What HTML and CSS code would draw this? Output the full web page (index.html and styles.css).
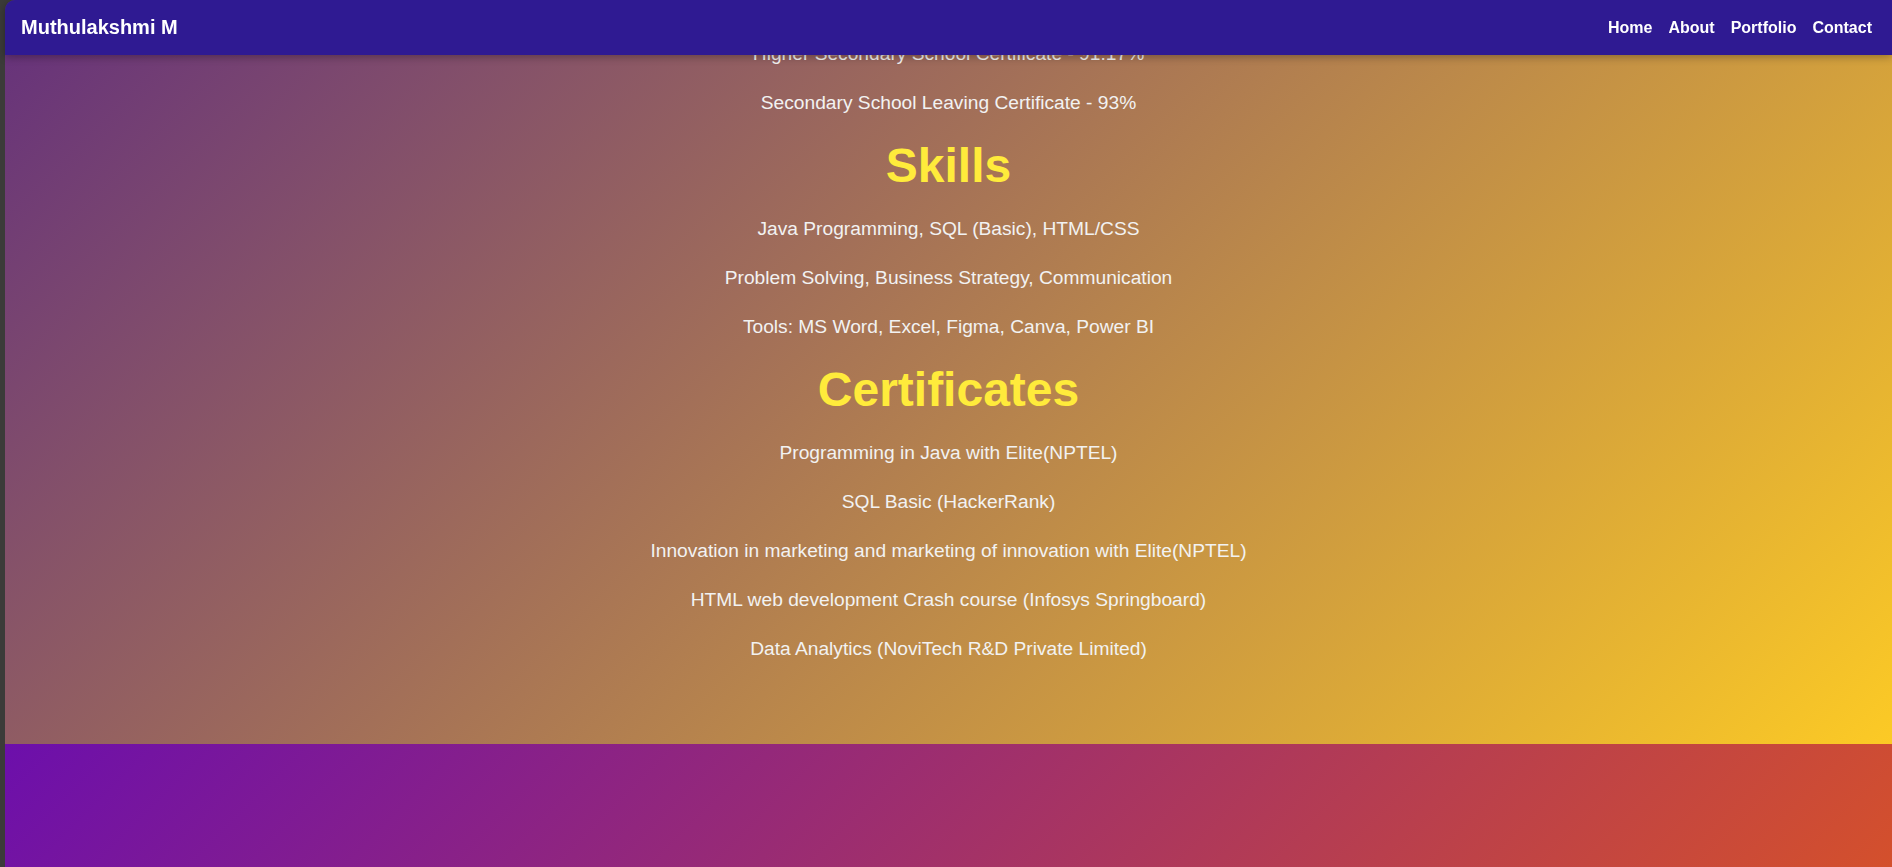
FILE: index.html
```html
<!DOCTYPE html>
<html lang="en">
<head>
<meta charset="utf-8">
<title>Muthulakshmi M - Portfolio</title>
<link rel="stylesheet" href="styles.css">
</head>
<body>
<div class="page">
  <header class="topbar">
    <div class="brand">Muthulakshmi M</div>
    <nav class="nav">
      <a href="#home">Home</a>
      <a href="#about">About</a>
      <a href="#portfolio">Portfolio</a>
      <a href="#contact">Contact</a>
    </nav>
  </header>

  <section class="about" id="about">
    <p>Higher Secondary School Certificate - 91.17%</p>
    <p>Secondary School Leaving Certificate - 93%</p>

    <h2>Skills</h2>
    <p>Java Programming, SQL (Basic), HTML/CSS</p>
    <p>Problem Solving, Business Strategy, Communication</p>
    <p>Tools: MS Word, Excel, Figma, Canva, Power BI</p>

    <h2>Certificates</h2>
    <p>Programming in Java with Elite(NPTEL)</p>
    <p>SQL Basic (HackerRank)</p>
    <p>Innovation in marketing and marketing of innovation with Elite(NPTEL)</p>
    <p>HTML web development Crash course (Infosys Springboard)</p>
    <p>Data Analytics (NoviTech R&amp;D Private Limited)</p>
  </section>

  <section class="portfolio" id="portfolio"></section>
</div>
</body>
</html>
```

FILE: styles.css
```css
* {
  box-sizing: border-box;
}

html, body {
  margin: 0;
  padding: 0;
}

body {
  background: #3b3b39;
  font-family: "Liberation Sans", Arial, sans-serif;
  overflow: hidden;
}

.page {
  margin-left: 5px;
  border-top-left-radius: 10px;
  overflow: hidden;
  height: 867px;
}

.topbar {
  position: fixed;
  top: 0;
  left: 5px;
  right: 0;
  height: 55px;
  display: flex;
  align-items: center;
  justify-content: space-between;
  padding: 0 20px 0 16px;
  background: #2f1a92;
  border-top-left-radius: 10px;
  box-shadow: 0 2px 8px rgba(0, 0, 0, 0.3);
  z-index: 10;
}

.brand {
  color: #ffffff;
  font-size: 20px;
  font-weight: bold;
}

.nav {
  display: flex;
  gap: 16px;
}

.nav a {
  color: #ffffff;
  font-size: 16px;
  font-weight: bold;
  text-decoration: none;
}

.about {
  height: 744px;
  padding: 20px 20px 0;
  text-align: center;
  color: #f2f2f2;
  background: linear-gradient(135deg, #64307c, #fcca25);
  display: flow-root;
}

.about p {
  margin: 18px 0;
  font-size: 19.2px;
  line-height: 31px;
}

.about h2 {
  margin: 20px 0;
  font-size: 48px;
  line-height: 55px;
  color: #ffeb3b;
  font-weight: bold;
}

.portfolio {
  height: 123px;
  background: linear-gradient(135deg, #6c0fab, #d4502c);
}
```
